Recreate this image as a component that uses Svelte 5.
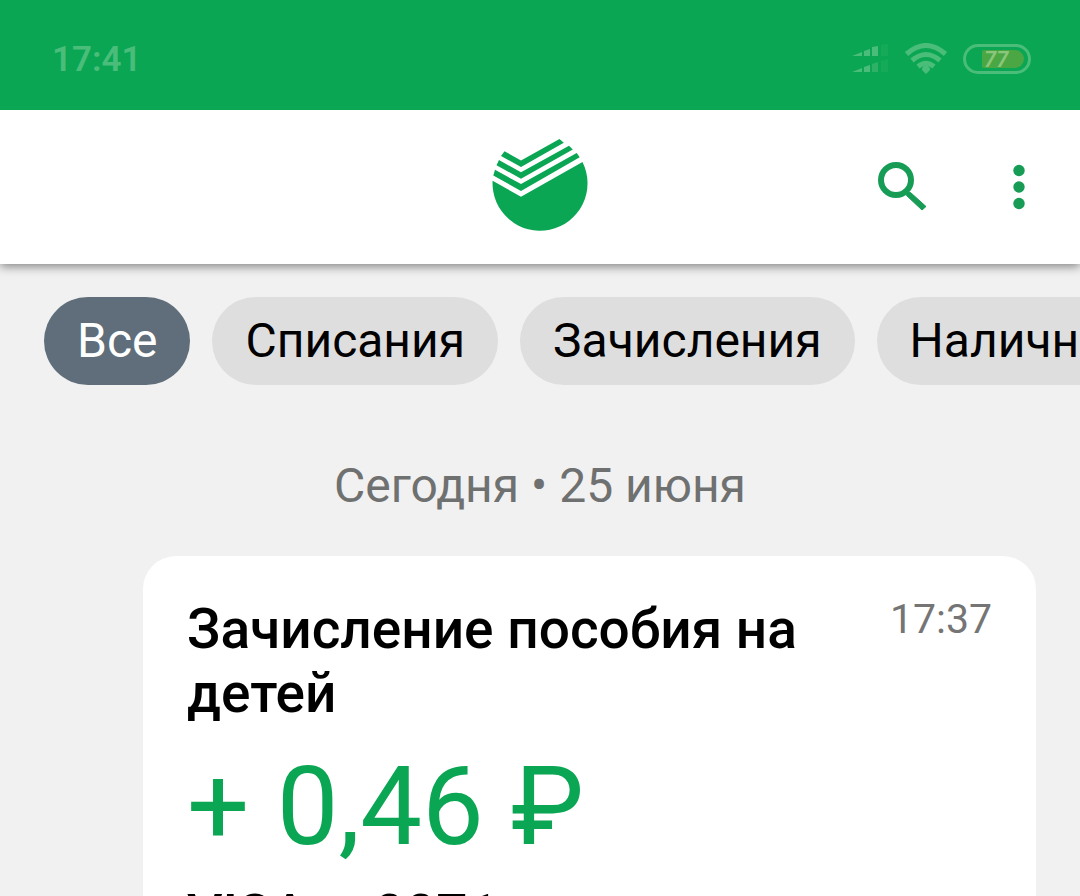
<script lang="ts">
  const filters = ['Все', 'Списания', 'Зачисления', 'Наличные'];
  let active = $state('Все');

  const operation = {
    title: 'Зачисление пособия на детей',
    time: '17:37',
    amount: '+ 0,46 ₽',
    card: 'VISA •• 0071',
  };
</script>

<div class="app">
  <div class="statusbar">
    <span class="clock">17:41</span>
    <div class="indicators">
      <svg width="38" height="30" viewBox="0 0 38 30" aria-hidden="true">
        <g fill="#49bd79">
          <path d="M1 12l10-4v4zM13 7l6-2v7h-6zM21 3l6-1v10h-6z" />
          <path d="M1 28l10-4v4zM13 23l6-2v7h-6z" />
        </g>
        <path d="M21 20l6-2v10h-6z" fill="#2fb067" />
        <path d="M30 1l7-2v13h-7zM30 17l7-2v13h-7z" fill="#14aa58" />
      </svg>
      <svg width="44" height="32" viewBox="0 0 44 32" fill="none" stroke="#49bd79" stroke-width="5" aria-hidden="true">
        <path d="M2.500 11Q22-6 41.500 11M8 17.500Q22 5.500 36 17.500M14 23.500Q22 17 30 23.500" />
        <path d="M22 31l-4-4q0-4.500 4-4.500t4 4.500z" fill="#49bd79" stroke="none" />
      </svg>
      <span class="battery"><span class="charge">77</span></span>
    </div>
  </div>

  <header class="toolbar">
    <svg class="logo" width="96" height="92" viewBox="0 0 96 92" aria-label="Сбербанк">
      <g fill="#0aa653">
        <path d="M.6 41.700L29 57.700 90.500 23A47.500 47.500 0 1 1 .6 41.700z" />
        <path d="M12.500 12.300L29 21.500 67.500 0 71.800 3.700 29 28 9 17z" />
        <path d="M7 21L29 33.300 77 6.800 80.800 10.500 29 39.800 4.500 26.200z" />
        <path d="M3 30.800L29 45.100 84.700 14 87.700 18.300 29 51.900 1.300 36.500z" />
      </g>
    </svg>
    <div class="actions">
      <button type="button" aria-label="Поиск">
        <svg width="50" height="50" viewBox="0 0 50 50" fill="none" stroke="#179c55">
          <circle cx="18" cy="18" r="15" stroke-width="6" />
          <path d="M29 30.500L32.500 30.500 48 44.500 44 48 28.500 33.500z" fill="#179c55" stroke-width="1" />
        </svg>
      </button>
      <button type="button" aria-label="Меню">
        <svg width="12" height="46" viewBox="0 0 12 46" fill="#179c55">
          <circle cx="6" cy="6.500" r="5.700" />
          <circle cx="6" cy="23" r="5.700" />
          <circle cx="6" cy="39.500" r="5.700" />
        </svg>
      </button>
    </div>
  </header>

  <main>
    <nav class="filters" aria-label="Фильтр операций">
      {#each filters as name (name)}
        <button type="button" class:active={active === name} onclick={() => (active = name)}>{name}</button>
      {/each}
    </nav>

    <h2 class="date">Сегодня • 25 июня</h2>

    <article class="operation">
      <div class="head">
        <h3>{operation.title}</h3>
        <time>{operation.time}</time>
      </div>
      <p class="amount">{operation.amount}</p>
      <p class="card">{operation.card}</p>
    </article>
  </main>
</div>

<style>
  :global(body) {
    background: #f1f1f1;
  }
  .app {
    display: flex;
    flex-direction: column;
    height: 100vh;
    overflow: hidden;
    font-family: Roboto, 'Liberation Sans', sans-serif;
    color: #000;
  }
  .statusbar {
    position: relative;
    z-index: 2;
    display: flex;
    flex-shrink: 0;
    align-items: center;
    justify-content: space-between;
    height: 110px;
    padding: 8px 49px 0 52px;
    box-sizing: border-box;
    background: #0aa653;
    color: #49bd79;
  }
  .clock {
    font-size: 35px;
    font-weight: 600;
  }
  .indicators {
    display: flex;
    align-items: center;
    gap: 15px;
  }
  .battery {
    display: flex;
    width: 68px;
    height: 30px;
    padding: 3px 4px 3px 16px;
    box-sizing: border-box;
    border: 3px solid #49bd79;
    border-radius: 15px;
  }
  .charge {
    flex: 1;
    padding-left: 2px;
    border-radius: 2px 10px 10px 2px;
    background: #4aa744;
    color: #8cc67c;
    font-size: 22px;
    font-style: italic;
    font-weight: 600;
    line-height: 20px;
  }
  .toolbar {
    position: relative;
    display: grid;
    grid-template-columns: 1fr auto 1fr;
    flex-shrink: 0;
    align-items: center;
    height: 154px;
    padding: 0 55px 4px;
    box-sizing: border-box;
    background: #fff;
    box-shadow: 0 2px 10px rgba(0, 0, 0, 0.5);
  }
  .logo {
    grid-column: 2;
  }
  .actions {
    display: flex;
    align-items: center;
    justify-content: flex-end;
    gap: 85px;
    padding-top: 4px;
  }
  button {
    padding: 0;
    border: 0;
    background: none;
    font: inherit;
    color: inherit;
    cursor: pointer;
  }
  .actions svg {
    display: block;
  }
  main {
    flex: 1;
    min-height: 0;
    padding: 33px 44px 0;
    overflow: hidden;
  }
  .filters {
    display: flex;
    gap: 22px;
  }
  .filters button {
    flex-shrink: 0;
    height: 88px;
    padding: 0 33px 2px;
    border-radius: 44px;
    background: #dedede;
    font-size: 48px;
  }
  .filters button.active {
    background: #5f6e7a;
    color: #fff;
  }
  .date {
    margin: 73px 0 0;
    font-size: 48px;
    font-weight: 400;
    line-height: 56px;
    text-align: center;
    color: #6f7070;
  }
  .operation {
    margin: 42px 0 0 99px;
    padding: 41px 44px;
    border-radius: 33px;
    background: #fff;
  }
  .head {
    display: flex;
    align-items: flex-start;
    justify-content: space-between;
    gap: 44px;
  }
  h3 {
    margin: 0;
    font-size: 55px;
    font-weight: 500;
    line-height: 64px;
  }
  time {
    font-size: 41px;
    line-height: 44px;
    color: #757575;
  }
  p {
    margin: 0;
  }
  .amount {
    margin-top: 18px;
    font-size: 110px;
    line-height: 128px;
    color: #0aa653;
  }
  .card {
    margin-top: 12px;
    font-size: 55px;
    font-weight: 500;
    line-height: 64px;
  }
</style>
